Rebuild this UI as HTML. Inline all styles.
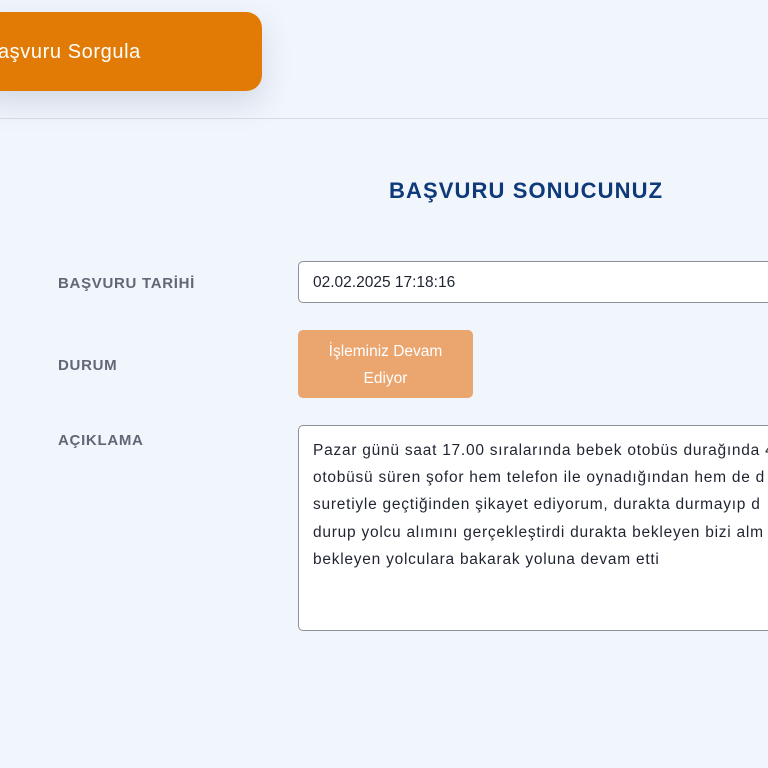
<!DOCTYPE html>
<html><head><meta charset="utf-8"><style>
*{margin:0;padding:0;box-sizing:border-box}
html,body{width:768px;height:768px;overflow:hidden;background:#f1f5fc;font-family:"Liberation Sans",sans-serif;position:relative}
.btn{position:absolute;left:-20px;top:12px;width:282px;height:79px;background:#e27b06;border-radius:16px;box-shadow:0 12px 30px rgba(80,90,120,.18);color:#fff;font-size:20px;letter-spacing:0.6px;line-height:80px;padding-left:4px;white-space:nowrap}
.hr{position:absolute;left:0;top:118px;width:768px;height:1px;background:#d5dae3}
.title{position:absolute;left:389px;top:178px;font-size:22px;font-weight:bold;color:#0f3a7a;letter-spacing:1.1px}
.lbl{position:absolute;left:58px;font-size:15px;font-weight:bold;color:#606875;letter-spacing:0.7px}
.box{position:absolute;left:298px;width:480px;background:#fff;border:1px solid #8a8f98;border-radius:5px;color:#1f2430;font-size:15px}
.status{position:absolute;left:298px;top:330px;width:175px;height:68px;background:#eba56f;border-radius:5px;color:#fff;font-size:15.5px;text-align:center;line-height:27px;padding-top:8px}
.ta{top:425px;height:206px;padding:11px 0 0 14px;line-height:27.2px;white-space:nowrap;overflow:hidden;font-size:15.5px;letter-spacing:0.75px}
</style></head><body>
<div class="btn">Başvuru Sorgula</div>
<div class="hr"></div>
<div class="title">BAŞVURU SONUCUNUZ</div>
<div class="lbl" style="top:275px">BAŞVURU TARİHİ</div>
<div class="lbl" style="top:357px">DURUM</div>
<div class="lbl" style="top:432px">AÇIKLAMA</div>
<div class="box" style="top:261px;height:42px;line-height:42px;padding-left:14px;font-size:15.5px">02.02.2025 17:18:16</div>
<div class="status">İşleminiz Devam<br>Ediyor</div>
<div class="box ta">Pazar günü saat 17.00 sıralarında bebek otobüs durağında 4<br>otobüsü süren şofor hem telefon ile oynadığından hem de d<br>suretiyle geçtiğinden şikayet ediyorum, durakta durmayıp d<br>durup yolcu alımını gerçekleştirdi durakta bekleyen bizi alm<br>bekleyen yolculara bakarak yoluna devam etti</div>
</body></html>
